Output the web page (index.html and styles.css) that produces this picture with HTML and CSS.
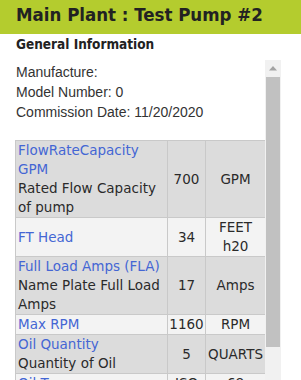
FILE: index.html
```html
<!DOCTYPE html>
<html>
<head>
<meta charset="utf-8">
<link rel="stylesheet" href="styles.css">
</head>
<body>
<div class="header"><h1 class="title">Main Plant : Test Pump #2</h1></div>
<h2 class="section">General Information</h2>
<div class="pane">
  <div class="content">
    <div class="info">
      <div>Manufacture:</div>
      <div>Model Number: 0</div>
      <div>Commission Date: 11/20/2020</div>
    </div>
    <table class="specs">
      <colgroup><col class="c1"><col class="c2"><col class="c3"></colgroup>
      <tr class="odd"><td class="name"><span class="link">FlowRateCapacity GPM</span><br>Rated Flow Capacity of pump</td><td class="val">700</td><td class="unit">GPM</td></tr>
      <tr class="even"><td class="name"><span class="link">FT Head</span></td><td class="val">34</td><td class="unit">FEET h20</td></tr>
      <tr class="odd"><td class="name"><span class="link">Full Load Amps (FLA)</span><br>Name Plate Full Load Amps</td><td class="val">17</td><td class="unit">Amps</td></tr>
      <tr class="even"><td class="name"><span class="link">Max RPM</span></td><td class="val">1160</td><td class="unit">RPM</td></tr>
      <tr class="odd"><td class="name"><span class="link">Oil Quantity</span><br>Quantity of Oil</td><td class="val">5</td><td class="unit">QUARTS</td></tr>
      <tr class="even"><td class="name"><span class="link">Oil Type</span></td><td class="val">ISO</td><td class="unit">68</td></tr>
    </table>
  </div>
  <div class="scrollbar">
    <div class="sb-btn"><svg width="8" height="5" viewBox="0 0 8 5"><polygon points="4,0 8,4.5 0,4.5" fill="#a3a3a3"/></svg></div>
    <div class="sb-thumb"></div>
  </div>
</div>
</body>
</html>
```
FILE: styles.css
```css
html, body {
  margin: 0;
  padding: 0;
  background: #ffffff;
  overflow: hidden;
  height: 380px;
}
.header {
  background: #b4cc2e;
  height: 34px;
}
.title {
  margin: 0;
  padding-left: 16px;
  font-family: "DejaVu Sans Condensed", "DejaVu Sans", sans-serif;
  font-weight: bold;
  font-size: 18.5px;
  line-height: 30px;
  color: #222222;
}
.section {
  margin: 0;
  padding: 0 16px 6px;
  height: 20px;
  font-family: "DejaVu Sans Condensed", "DejaVu Sans", sans-serif;
  font-weight: bold;
  font-size: 13.5px;
  line-height: 20px;
  color: #222222;
}
.pane {
  display: flex;
  width: 281px;
  height: 340px;
}
.content {
  flex: 1;
  overflow: hidden;
  padding-left: 15px;
}
.scrollbar {
  width: 16px;
  flex: none;
  display: flex;
  flex-direction: column;
  background: #f1f1f1;
}
.sb-btn {
  height: 16px;
  display: flex;
  align-items: center;
  justify-content: center;
}
.sb-thumb {
  margin: 1px 1px 0;
  height: 270px;
  background: #c1c1c1;
}
.info {
  font-family: "Liberation Sans", Arial, sans-serif;
  font-size: 14px;
  line-height: 20px;
  color: #333333;
  padding: 2px 1px 18px;
}
.specs {
  width: 250px;
  table-layout: fixed;
  border-collapse: collapse;
  font-family: "DejaVu Sans", Verdana, sans-serif;
  font-size: 13.5px;
  line-height: 19px;
  color: #2a2a2a;
}
.c1 { width: 152px; }
.c2 { width: 38px; }
.c3 { width: 60px; }
.specs td {
  border: 1px solid #c9c9c9;
  padding: 0 0 0 2px;
  vertical-align: middle;
}
.specs .val, .specs .unit {
  text-align: center;
  padding: 0;
}
.odd { background: #dcdcdc; }
.even { background: #f3f3f3; }
.link { color: #4466d4; }
```
